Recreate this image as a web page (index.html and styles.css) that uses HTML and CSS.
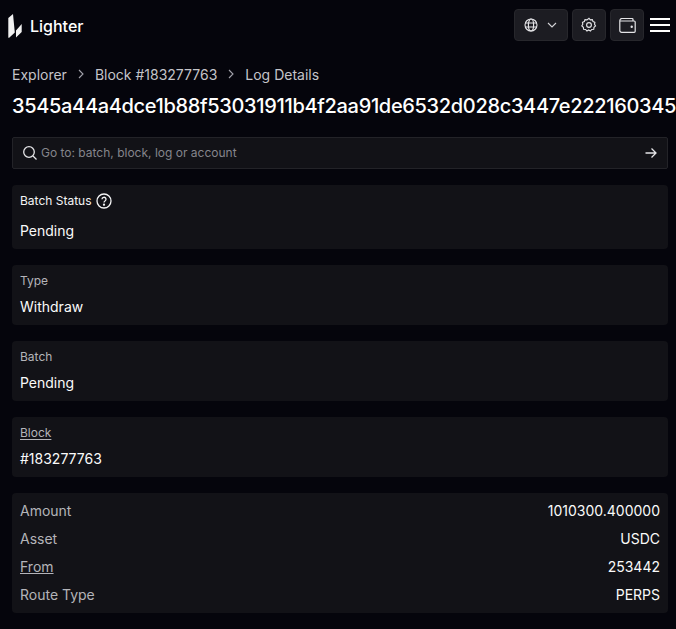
FILE: index.html
```html
<!DOCTYPE html>
<html lang="en">
<head>
<meta charset="utf-8">
<title>Lighter Explorer</title>
<link rel="stylesheet" href="styles.css">
</head>
<body>
<header class="topbar">
  <div class="brand">
    <svg class="logo" width="15" height="24" viewBox="0 0 15 24"><path d="M0.300 4 L5 0 L6.800 18.500 L1.200 23.700 H0.300 Z M8 16.500 L13.700 10 V18 L8 23.500 Z" fill="#f1f1f1"/></svg>
    <span class="brand-name">Lighter</span>
  </div>
  <div class="actions">
    <button class="icon-btn lang">
      <svg width="14" height="14" viewBox="0 0 14 14" fill="none" stroke="#e4e4e7" stroke-width="1.100"><circle cx="7" cy="7" r="6"/><ellipse cx="7" cy="7" rx="2.600" ry="6"/><path d="M1 5h12M1 9h12"/></svg>
      <svg width="10" height="6" viewBox="0 0 10 6" fill="none" stroke="#d4d4d8" stroke-width="1.100"><path d="M1 1l4 4 4-4"/></svg>
    </button>
    <button class="icon-btn square">
      <svg width="16" height="16" viewBox="0 0 24 24" fill="none" stroke="#e4e4e7" stroke-width="1.700"><path d="M12 2.500l2 2.300 3-.4 1 2.800 2.800 1.200-.5 3 1.500 2.600-2.300 2-.4 3-3 .2-2 2.300-2.600-1.500-2.600 1.500-2-2.300-3-.2-.4-3-2.300-2 1.500-2.600-.5-3 2.800-1.200 1-2.800 3 .4z" transform="translate(0 -.5)"/><circle cx="12" cy="12" r="3.600"/></svg>
    </button>
    <button class="icon-btn square">
      <svg width="17" height="15" viewBox="0 0 17 15" fill="none" stroke="#e4e4e7" stroke-width="1.200"><path d="M14 3V1.500a1 1 0 0 0-1-1H3A2.200 2.200 0 0 0 .8 2.700V12.500a1.800 1.800 0 0 0 1.800 1.800h12.600a1 1 0 0 0 1-1V4a1 1 0 0 0-1-1H.9"/><circle cx="12.700" cy="8.700" r=".6" fill="#e4e4e7"/></svg>
    </button>
    <div class="burger"><span></span><span></span><span></span></div>
  </div>
</header>
<main class="content">
  <nav class="crumbs">
    <span>Explorer</span>
    <svg class="chev" width="6" height="10" viewBox="0 0 6 10" fill="none" stroke="#a1a1aa" stroke-width="1.100"><path d="M1 1l4 4-4 4"/></svg>
    <span>Block #183277763</span>
    <svg class="chev" width="6" height="10" viewBox="0 0 6 10" fill="none" stroke="#a1a1aa" stroke-width="1.100"><path d="M1 1l4 4-4 4"/></svg>
    <span>Log Details</span>
  </nav>
  <h1 class="hash">3545a44a4dce1b88f53031911b4f2aa91de6532d028c3447e222160345</h1>
  <div class="search">
    <svg width="16" height="16" viewBox="0 0 16 16" fill="none" stroke="#e4e4e7" stroke-width="1.300"><circle cx="7" cy="7" r="5.300"/><path d="M11 11l3.500 3.500"/></svg>
    <span class="placeholder">Go to: batch, block, log or account</span>
    <svg class="arrow" width="12" height="12" viewBox="0 0 12 12" fill="none" stroke="#e4e4e7" stroke-width="1.300"><path d="M.5 6h10.500M6.500 1.500L11 6l-4.500 4.500"/></svg>
  </div>
  <section class="card status">
    <div class="label light">Batch Status
      <svg width="16" height="16" viewBox="0 0 16 16" fill="none" stroke="#f4f4f5" stroke-width="1.300"><circle cx="8" cy="8" r="7"/><path d="M6 6.300a2 2 0 1 1 3 1.700c-.7.400-1 .8-1 1.600"/><circle cx="8" cy="11.700" r=".5" fill="#f4f4f5"/></svg>
    </div>
    <div class="value">Pending</div>
  </section>
  <section class="card"><div class="label">Type</div><div class="value">Withdraw</div></section>
  <section class="card"><div class="label">Batch</div><div class="value">Pending</div></section>
  <section class="card"><div class="label"><u>Block</u></div><div class="value">#183277763</div></section>
  <section class="card rows">
    <div class="row"><span class="key">Amount</span><span class="val">1010300.400000</span></div>
    <div class="row"><span class="key">Asset</span><span class="val">USDC</span></div>
    <div class="row"><span class="key"><u>From</u></span><span class="val">253442</span></div>
    <div class="row"><span class="key">Route Type</span><span class="val">PERPS</span></div>
  </section>
</main>
</body>
</html>
```
FILE: styles.css
```css
* { box-sizing: border-box; }
html, body { margin: 0; height: 100%; overflow: hidden; }
body { background: #05050c; color: #f4f4f5; font-family: Inter, "Liberation Sans", sans-serif; }
.topbar { height: 50px; display: flex; align-items: center; justify-content: space-between; padding: 0 6px 0 8px; }
.brand { display: flex; align-items: center; gap: 7px; margin-top: 2px; }
.brand-name { font-size: 16px; font-weight: 500; color: #fff; }
.actions { display: flex; align-items: center; gap: 4px; }
.icon-btn { height: 32px; display: flex; align-items: center; justify-content: center; background: #1c1c22; border: 1px solid #27272c; border-radius: 4px; padding: 0; }
.lang { width: 54px; gap: 9px; padding-right: 2px; }
.square { width: 34px; }
.burger { width: 20px; margin-left: 2px; display: flex; flex-direction: column; gap: 4px; }
.burger span { height: 2px; background: #fff; }
.content { padding: 0 8px 0 12px; width: 676px; }
.crumbs { display: flex; align-items: center; gap: 11px; height: 20px; margin-top: 14px; font-size: 14px; color: #c4c4c9; }
.hash { margin: 10px 0 0; font-size: 20px; letter-spacing: -0.33px; line-height: 24px; font-weight: 500; color: #fff; white-space: nowrap; width: 664px; overflow: hidden; }
.search { display: flex; align-items: center; width: 656px; height: 32px; margin-top: 19px; padding: 0 10px 0 9px; gap: 3px; background: #121217; border: 1px solid #232328; border-radius: 2px; }
.placeholder { flex: 1; font-size: 12px; line-height: 14px; padding-bottom: 1px; color: #85858c; }
.card { width: 656px; background: #121217; border-radius: 4px; margin-top: 16px; padding: 8px; height: 60px; }
.status { height: 64px; }
.label { font-size: 12px; line-height: 16px; color: #b4b4b9; display: flex; align-items: center; gap: 4px; }
.label.light { color: #f4f4f5; }
.label u { text-underline-offset: 2px; }
.value { margin-top: 8px; font-size: 14px; line-height: 20px; font-weight: 400; color: #fafafa; }
.status .label { height: 16px; }
.status .value { margin-top: 12px; }
.rows { height: 120px; padding: 3px 8px; }
.row { height: 28px; display: flex; align-items: center; justify-content: space-between; font-size: 14px; }
.key { color: #b4b4b9; }
.val { color: #fafafa; font-weight: 400; font-size: 14px; }
```
